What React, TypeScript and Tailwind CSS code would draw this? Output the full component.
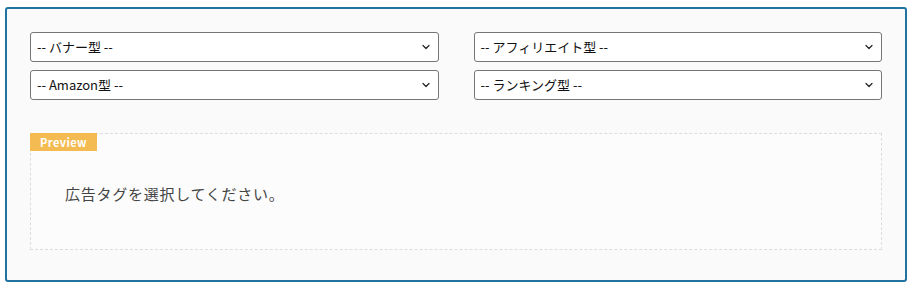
import { ChevronDown } from "lucide-react";

const selects = [
  "-- バナー型 --",
  "-- アフィリエイト型 --",
  "-- Amazon型 --",
  "-- ランキング型 --",
];

function FakeSelect({ label }: { label: string }) {
  return (
    <div className="h-[30px] flex items-center justify-between pl-[6px] pr-[6px] border border-[#767676] rounded-[3px] bg-white text-[13px] text-[#111]">
      <span>{label}</span>
      <ChevronDown size={12} strokeWidth={2.4} className="text-[#222]" />
    </div>
  );
}

export default function App() {
  return (
    <div
      className="bg-white pl-[5px] pr-[5px] pt-[7px] pb-[5px]"
      style={{ fontFamily: '"Noto Sans CJK JP", "Noto Sans", sans-serif' }}
    >
      <div className="border-2 border-[#2274a0] rounded-[3px] bg-[#fafafa] px-[23px] pt-[23px] pb-[30px]">
        {/* selects */}
        <div className="grid grid-cols-2 gap-x-[35px] gap-y-[8px]">
          {selects.map((s) => (
            <FakeSelect key={s} label={s} />
          ))}
        </div>

        {/* preview */}
        <div className="mt-[33px] h-[117px] border border-dashed border-[#dcdcdc] bg-[#fcfcfc]">
          <div className="w-fit bg-[#f4bb52] text-white text-[11px] font-bold tracking-[0.04em] px-[10px] leading-[18px] h-[18px] -mt-px -ml-px">
            Preview
          </div>
          <div className="pl-[34px] pt-[33px] text-[15px] tracking-[0.05em] text-[#444] leading-[20px]">
            広告タグを選択してください。
          </div>
        </div>
      </div>
    </div>
  );
}
